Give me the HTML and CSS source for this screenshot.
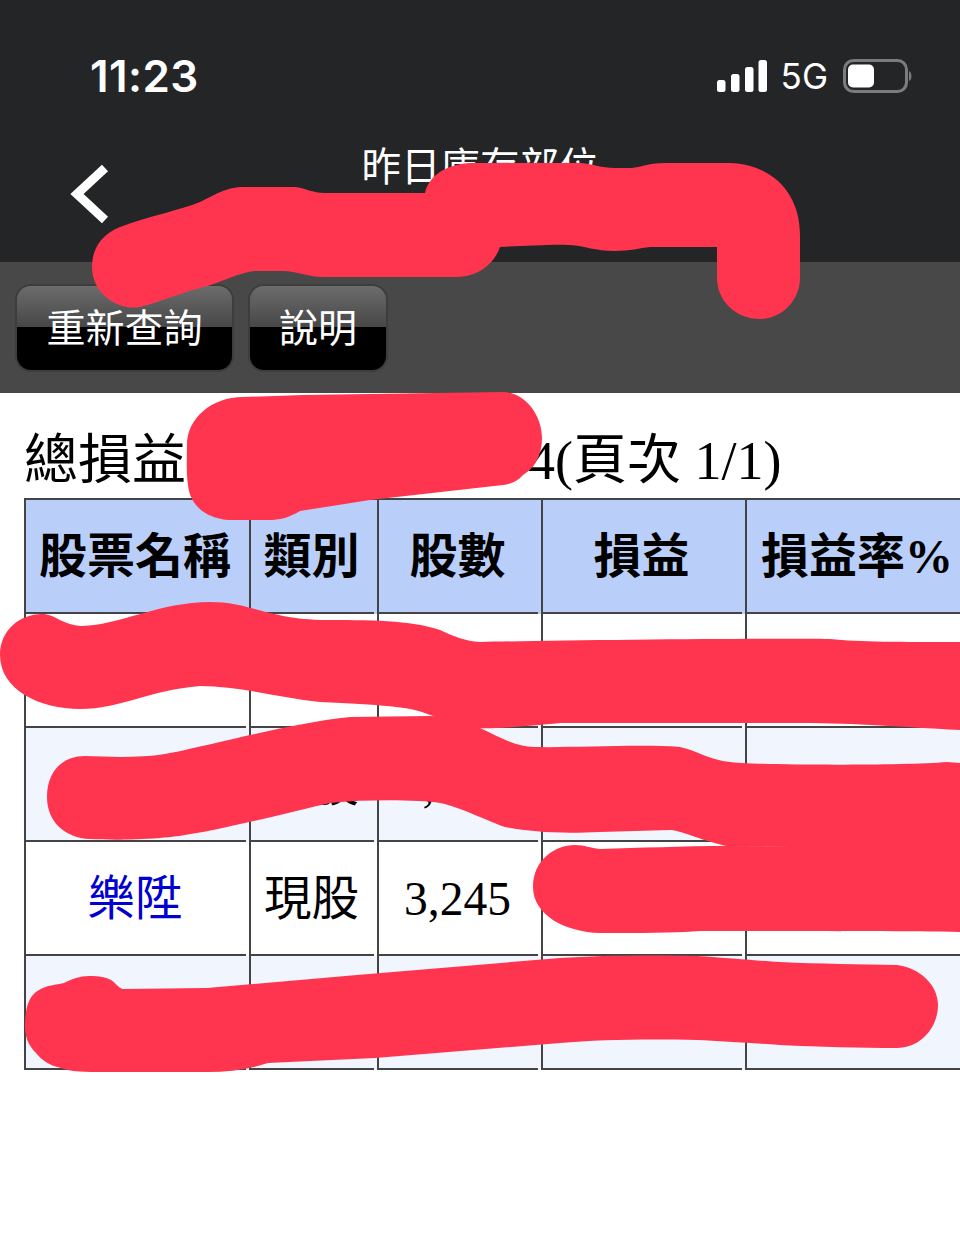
FILE: index.html
```html
<!DOCTYPE html>
<html lang="zh-Hant">
<head>
<meta charset="utf-8">
<title>昨日庫存部位</title>
<link rel="stylesheet" href="styles.css">
</head>
<body>
<div class="page">
  <header class="topbar">
    <div class="status">
      <span class="time">11:23</span>
      <div class="status-right">
        <svg class="signal" width="50" height="32" viewBox="0 0 50 32"><rect x="0" y="20" width="8.500" height="12" rx="2.500"/><rect x="14" y="14" width="8.500" height="18" rx="2.500"/><rect x="28" y="7" width="8.500" height="25" rx="2.500"/><rect x="41.500" y="0" width="8.500" height="32" rx="2.500"/></svg>
        <span class="net">5G</span>
        <svg class="battery" width="70" height="34" viewBox="0 0 70 34"><rect x="1.500" y="1.500" width="62" height="31" rx="9" fill="none" stroke="#7b7c7d" stroke-width="3"/><rect x="5" y="5.500" width="26" height="23" rx="5" fill="#fff"/><path d="M66 12c3 1 3.500 9 0 10z" fill="#7b7c7d"/></svg>
      </div>
    </div>
    <nav class="nav">
      <svg class="back" width="40" height="60" viewBox="0 0 40 60"><path d="M35 4 7 30l28 26" fill="none" stroke="#fff" stroke-width="9"/></svg>
      <h1 class="nav-title">昨日庫存部位</h1>
    </nav>
  </header>
  <div class="toolbar">
    <button class="gloss wide">重新查詢</button>
    <button class="gloss">說明</button>
  </div>
  <main class="content">
    <p class="summary">總損益<span class="hidden-value"></span>4(頁次 1/1)</p>
    <table class="stocks">
      <colgroup><col class="c1"><col class="c2"><col class="c3"><col class="c4"><col class="c5"></colgroup>
      <thead><tr><th>股票名稱</th><th>類別</th><th>股數</th><th>損益</th><th>損益率%</th></tr></thead>
      <tbody>
        <tr><td></td><td></td><td></td><td></td><td></td></tr>
        <tr class="alt"><td></td><td>現股</td><td><span class="comma-only">,</span></td><td></td><td></td></tr>
        <tr><td><a class="stock-link">樂陞</a></td><td>現股</td><td>3,245</td><td></td><td></td></tr>
        <tr class="alt"><td></td><td></td><td></td><td></td><td></td></tr>
      </tbody>
    </table>
  </main>
  <svg class="scribbles" width="960" height="1253" viewBox="0 0 960 1253" fill="#ff344f">
    <path d="M92 267C92 250 100 235 120 227C150 216 180 210 200 202C215 195 225 187 245 187L295 187C305 188 312 193 325 193L425 193C428 180 440 165 470 163L580 163C595 164 600 168 615 168L632 168C645 166 650 163 665 163L730 163C775 165 800 195 800 235L800 278C800 300 782 319 760 319C735 319 717 300 717 278L717 247L650 247C640 248 630 251 615 251C595 251 585 246 570 245C555 244 520 246 500 247C495 262 480 277 455 277L325 277C305 277 300 271 280 271L255 271C240 272 220 283 200 288C180 293 160 302 140 307C120 311 92 295 92 267Z"/>
    <path d="M187 445C187 418 212 397 243 397L303 395L503 392C525 392 542 415 542 438C542 455 535 468 523 475C517 482 510 484 503 485L370 500L300 511C288 518 280 520 268 520L228 520C205 518 190 505 188 485C186 470 187 458 187 445Z"/>
    <path d="M0 655C0 630 20 614 42 614C55 614 62 625 82 626C120 625 160 602 210 602C250 602 265 618 320 620C370 620 410 620 440 630C455 637 465 641 480 642C560 640 800 638 830 639C860 642 900 642 960 642L960 730C900 727 860 723 800 723L560 723C520 727 480 730 470 727L430 715C410 706 380 705 320 702C280 698 240 686 200 686C150 690 120 709 80 709C40 709 0 690 0 655Z"/>
    <path d="M47 797C47 772 62 756 85 756C110 757 140 758 165 754C200 748 290 723 350 717L430 716C450 716 465 722 480 728C500 737 515 747 535 747C570 748 640 744 680 747C695 750 710 760 730 762C745 765 900 766 947 762L960 763L960 850L726 846C700 840 680 830 670 830L600 832C560 834 530 832 505 827C490 822 460 807 440 803C420 800 370 799 330 803C290 812 200 836 160 838C130 840 110 840 90 839C65 838 47 822 47 797Z"/>
    <path d="M533 887C533 860 555 845 575 845C585 845 590 848 600 849C640 848 680 846 730 846L960 848L960 932C900 931 760 931 700 931C670 933 640 933 600 933C565 932 533 915 533 887Z"/>
    <path d="M25 1027C25 1005 30 995 39 990C48 985 55 985 64 983C72 979 80 976 89 976C100 976 105 977 111 980C116 983 118 988 123 989L207 988L357 975L560 958C600 955 660 955 697 956C730 958 760 961 780 962C820 964 860 964 897 965C920 968 938 985 938 1005C938 1028 920 1048 897 1048C860 1048 820 1047 780 1045C750 1043 720 1041 697 1040C660 1039 600 1039 560 1043L375 1058L268 1063C250 1069 230 1072 207 1072L107 1072C85 1072 70 1072 61 1068C48 1065 42 1060 36 1053C28 1045 25 1036 25 1027Z"/>
  </svg>
</div>
</body>
</html>
```
FILE: styles.css
```css
html, body {
  margin: 0;
  padding: 0;
  background: #fff;
}

.page {
  position: relative;
  width: 960px;
  height: 1253px;
  overflow: hidden;
  font-family: "Liberation Serif", "Noto Sans CJK TC", serif;
  color: #000;
}

.topbar {
  height: 262px;
  background: #242527;
  color: #fff;
  font-family: Inter, "Noto Sans CJK TC", sans-serif;
}

.status {
  height: 130px;
  padding: 22px 51px 0 90px;
  display: flex;
  justify-content: space-between;
  align-items: center;
  box-sizing: border-box;
}

.time {
  font-size: 44px;
  font-weight: 600;
  line-height: 50px;
  letter-spacing: 0.400px;
}

.status-right {
  display: flex;
  align-items: center;
  gap: 14px;
}

.signal { fill: #fff; }

.net {
  font-size: 35px;
  line-height: 40px;
  font-weight: 400;
  margin-right: 1px;
}

.battery { margin-right: -4px; }

.nav {
  position: relative;
  height: 132px;
  display: flex;
  justify-content: center;
}

.back {
  position: absolute;
  left: 70px;
  top: 34px;
}

.nav-title {
  margin: 11px 0 0;
  font-size: 39.500px;
  line-height: 46px;
  font-weight: 400;
  font-family: "Noto Sans CJK TC", sans-serif;
}

.toolbar {
  height: 131px;
  box-sizing: border-box;
  background: #484848;
  padding: 24px 17px 0;
  display: flex;
  gap: 18px;
  align-items: flex-start;
}

.gloss {
  width: 136px;
  height: 84px;
  padding: 0 0 6px;
  border: 0;
  border-radius: 14px;
  background: linear-gradient(to bottom, #6c6c6c 0, #474747 41px, #000 41px, #000 100%);
  box-shadow: 0 0 0 2px #3d3d3d;
  color: #fff;
  font-family: "Noto Sans CJK TC", sans-serif;
  font-size: 39px;
  line-height: 78px;
}

.gloss.wide { width: 215px; }

.content {
  padding-left: 24px;
}

.summary {
  margin: 0;
  height: 105px;
  box-sizing: border-box;
  padding-top: 37px;
  font-size: 54px;
  line-height: 62px;
  white-space: nowrap;
}

.hidden-value {
  display: inline-block;
  width: 342px;
}

.stocks {
  table-layout: fixed;
  width: 1000px;
  border-collapse: separate;
  border-spacing: 0;
  border-top: 2px solid #444;
  font-size: 47.500px;
}

.c1 { width: 225px; }
.c2 { width: 128px; }
.c3 { width: 164px; }
.c4 { width: 204px; }
.c5 { width: 279px; }

.stocks th, .stocks td {
  box-sizing: border-box;
  height: 114px;
  padding: 0 5px 0 0;
  border-left: 2px solid #444;
  text-align: center;
  vertical-align: middle;
  line-height: 56px;
  background: linear-gradient(#444, #444) 0 100% / calc(100% - 3px) 2px no-repeat, #fff;
}

.stocks th {
  background: linear-gradient(#444, #444) 0 100% / calc(100% - 3px) 2px no-repeat, #b9cffa;
  font-size: 48px;
  font-weight: 700;
  white-space: nowrap;
}

.stocks th:last-child {
  text-align: left;
  padding-left: 14px;
}

.stocks .alt td {
  background: linear-gradient(#444, #444) 0 100% / calc(100% - 3px) 2px no-repeat, #f0f5fe;
}

.comma-only { padding-right: 58px; }

.stock-link { color: #0000d0; }

.scribbles {
  position: absolute;
  left: 0;
  top: 0;
  pointer-events: none;
}
```
